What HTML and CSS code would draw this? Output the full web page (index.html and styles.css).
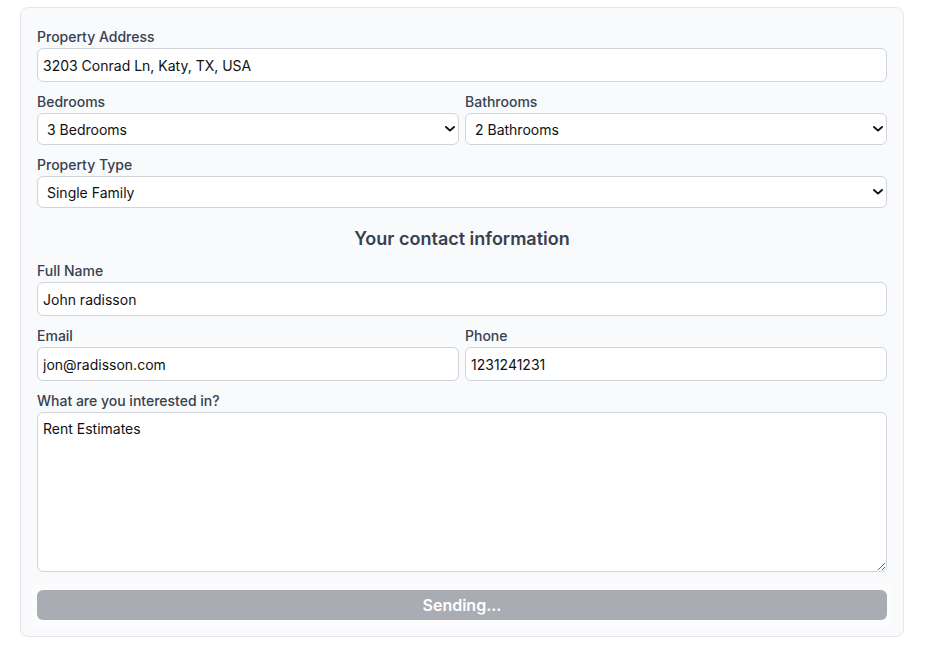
FILE: index.html
```html
<!DOCTYPE html>
<html lang="en">
<head>
<meta charset="utf-8">
<title>Contact form</title>
<link rel="stylesheet" href="styles.css">
</head>
<body>
<div class="page">
  <form class="card">
    <div class="field">
      <label class="label">Property Address</label>
      <input class="input" type="text" value="3203 Conrad Ln, Katy, TX, USA">
    </div>
    <div class="row">
      <div class="field">
        <label class="label">Bedrooms</label>
        <div class="select-wrap">
          <select class="select"><option>3 Bedrooms</option></select>
          <svg class="chev" width="10" height="6" viewBox="0 0 10 6"><path d="M1 1 L5 4.6 L9 1" fill="none" stroke="#111" stroke-width="1.9" stroke-linecap="round" stroke-linejoin="round"/></svg>
        </div>
      </div>
      <div class="field">
        <label class="label">Bathrooms</label>
        <div class="select-wrap">
          <select class="select"><option>2 Bathrooms</option></select>
          <svg class="chev" width="10" height="6" viewBox="0 0 10 6"><path d="M1 1 L5 4.6 L9 1" fill="none" stroke="#111" stroke-width="1.9" stroke-linecap="round" stroke-linejoin="round"/></svg>
        </div>
      </div>
    </div>
    <div class="field">
      <label class="label">Property Type</label>
      <div class="select-wrap">
        <select class="select"><option>Single Family</option></select>
        <svg class="chev" width="10" height="6" viewBox="0 0 10 6"><path d="M1 1 L5 4.6 L9 1" fill="none" stroke="#111" stroke-width="1.9" stroke-linecap="round" stroke-linejoin="round"/></svg>
      </div>
    </div>
    <h3 class="heading">Your contact information</h3>
    <div class="field">
      <label class="label">Full Name</label>
      <input class="input" type="text" value="John radisson">
    </div>
    <div class="row">
      <div class="field">
        <label class="label">Email</label>
        <input class="input" type="text" value="jon@radisson.com">
      </div>
      <div class="field">
        <label class="label">Phone</label>
        <input class="input" type="text" value="1231241231">
      </div>
    </div>
    <div class="field field-last">
      <label class="label">What are you interested in?</label>
      <textarea class="textarea">Rent Estimates</textarea>
    </div>
    <div class="footer">
      <button type="button" class="button">Sending...</button>
    </div>
  </form>
</div>
</body>
</html>
```

FILE: styles.css
```css
* { box-sizing: border-box; }
html, body { margin: 0; padding: 0; background: #ffffff; }
body { font-family: Inter, "Noto Sans", sans-serif; color: #111; }

.page { padding: 7px 0 0 20px; }

.card {
  width: 884px;
  background: #f9fafb;
  border: 1px solid #e5e7eb;
  border-radius: 8px;
  padding: 19px 16px 10px;
  display: flex;
  flex-direction: column;
}

.field { display: flex; flex-direction: column; margin-bottom: 10px; }
.field-last { margin-bottom: 11px; }
.row { display: grid; grid-template-columns: 1fr 1fr; column-gap: 6px; }

.label {
  font-size: 14px;
  line-height: 20px;
  font-weight: 500;
  color: #374151;
  margin-bottom: 1px;
}

.input, .textarea, .select {
  font-family: Inter, "Noto Sans", sans-serif;
  font-size: 14px;
  line-height: 20px;
  color: #111;
  background: #fff;
  border: 1px solid #d1d5db;
  border-radius: 6px;
  width: 100%;
  margin: 0;
  outline: none;
}
.input { height: 34px; padding: 6px 5px; }
.textarea { height: 160px; padding: 6px 5px; resize: vertical; display: block; }

.select-wrap { position: relative; }
.select {
  appearance: none;
  -webkit-appearance: none;
  height: 32px;
  padding: 6px 24px 4px 9px;
  display: block;
}
.chev { position: absolute; right: 4px; top: 13px; pointer-events: none; }

.heading {
  margin: 7px 0 8px;
  text-align: center;
  font-size: 18px;
  line-height: 28px;
  font-weight: 600;
  color: #374151;
}

.footer {
  margin: 0 -6px;
  padding: 7px 6px 6px;
  background: #fcfcfd;
}
.button {
  display: block;
  width: 100%;
  height: 30px;
  border: none;
  border-radius: 6px;
  background: #a9acb3;
  color: #fff;
  font-family: Inter, "Noto Sans", sans-serif;
  font-size: 16px;
  font-weight: 600;
  line-height: 20px;
  padding: 0;
}
```
